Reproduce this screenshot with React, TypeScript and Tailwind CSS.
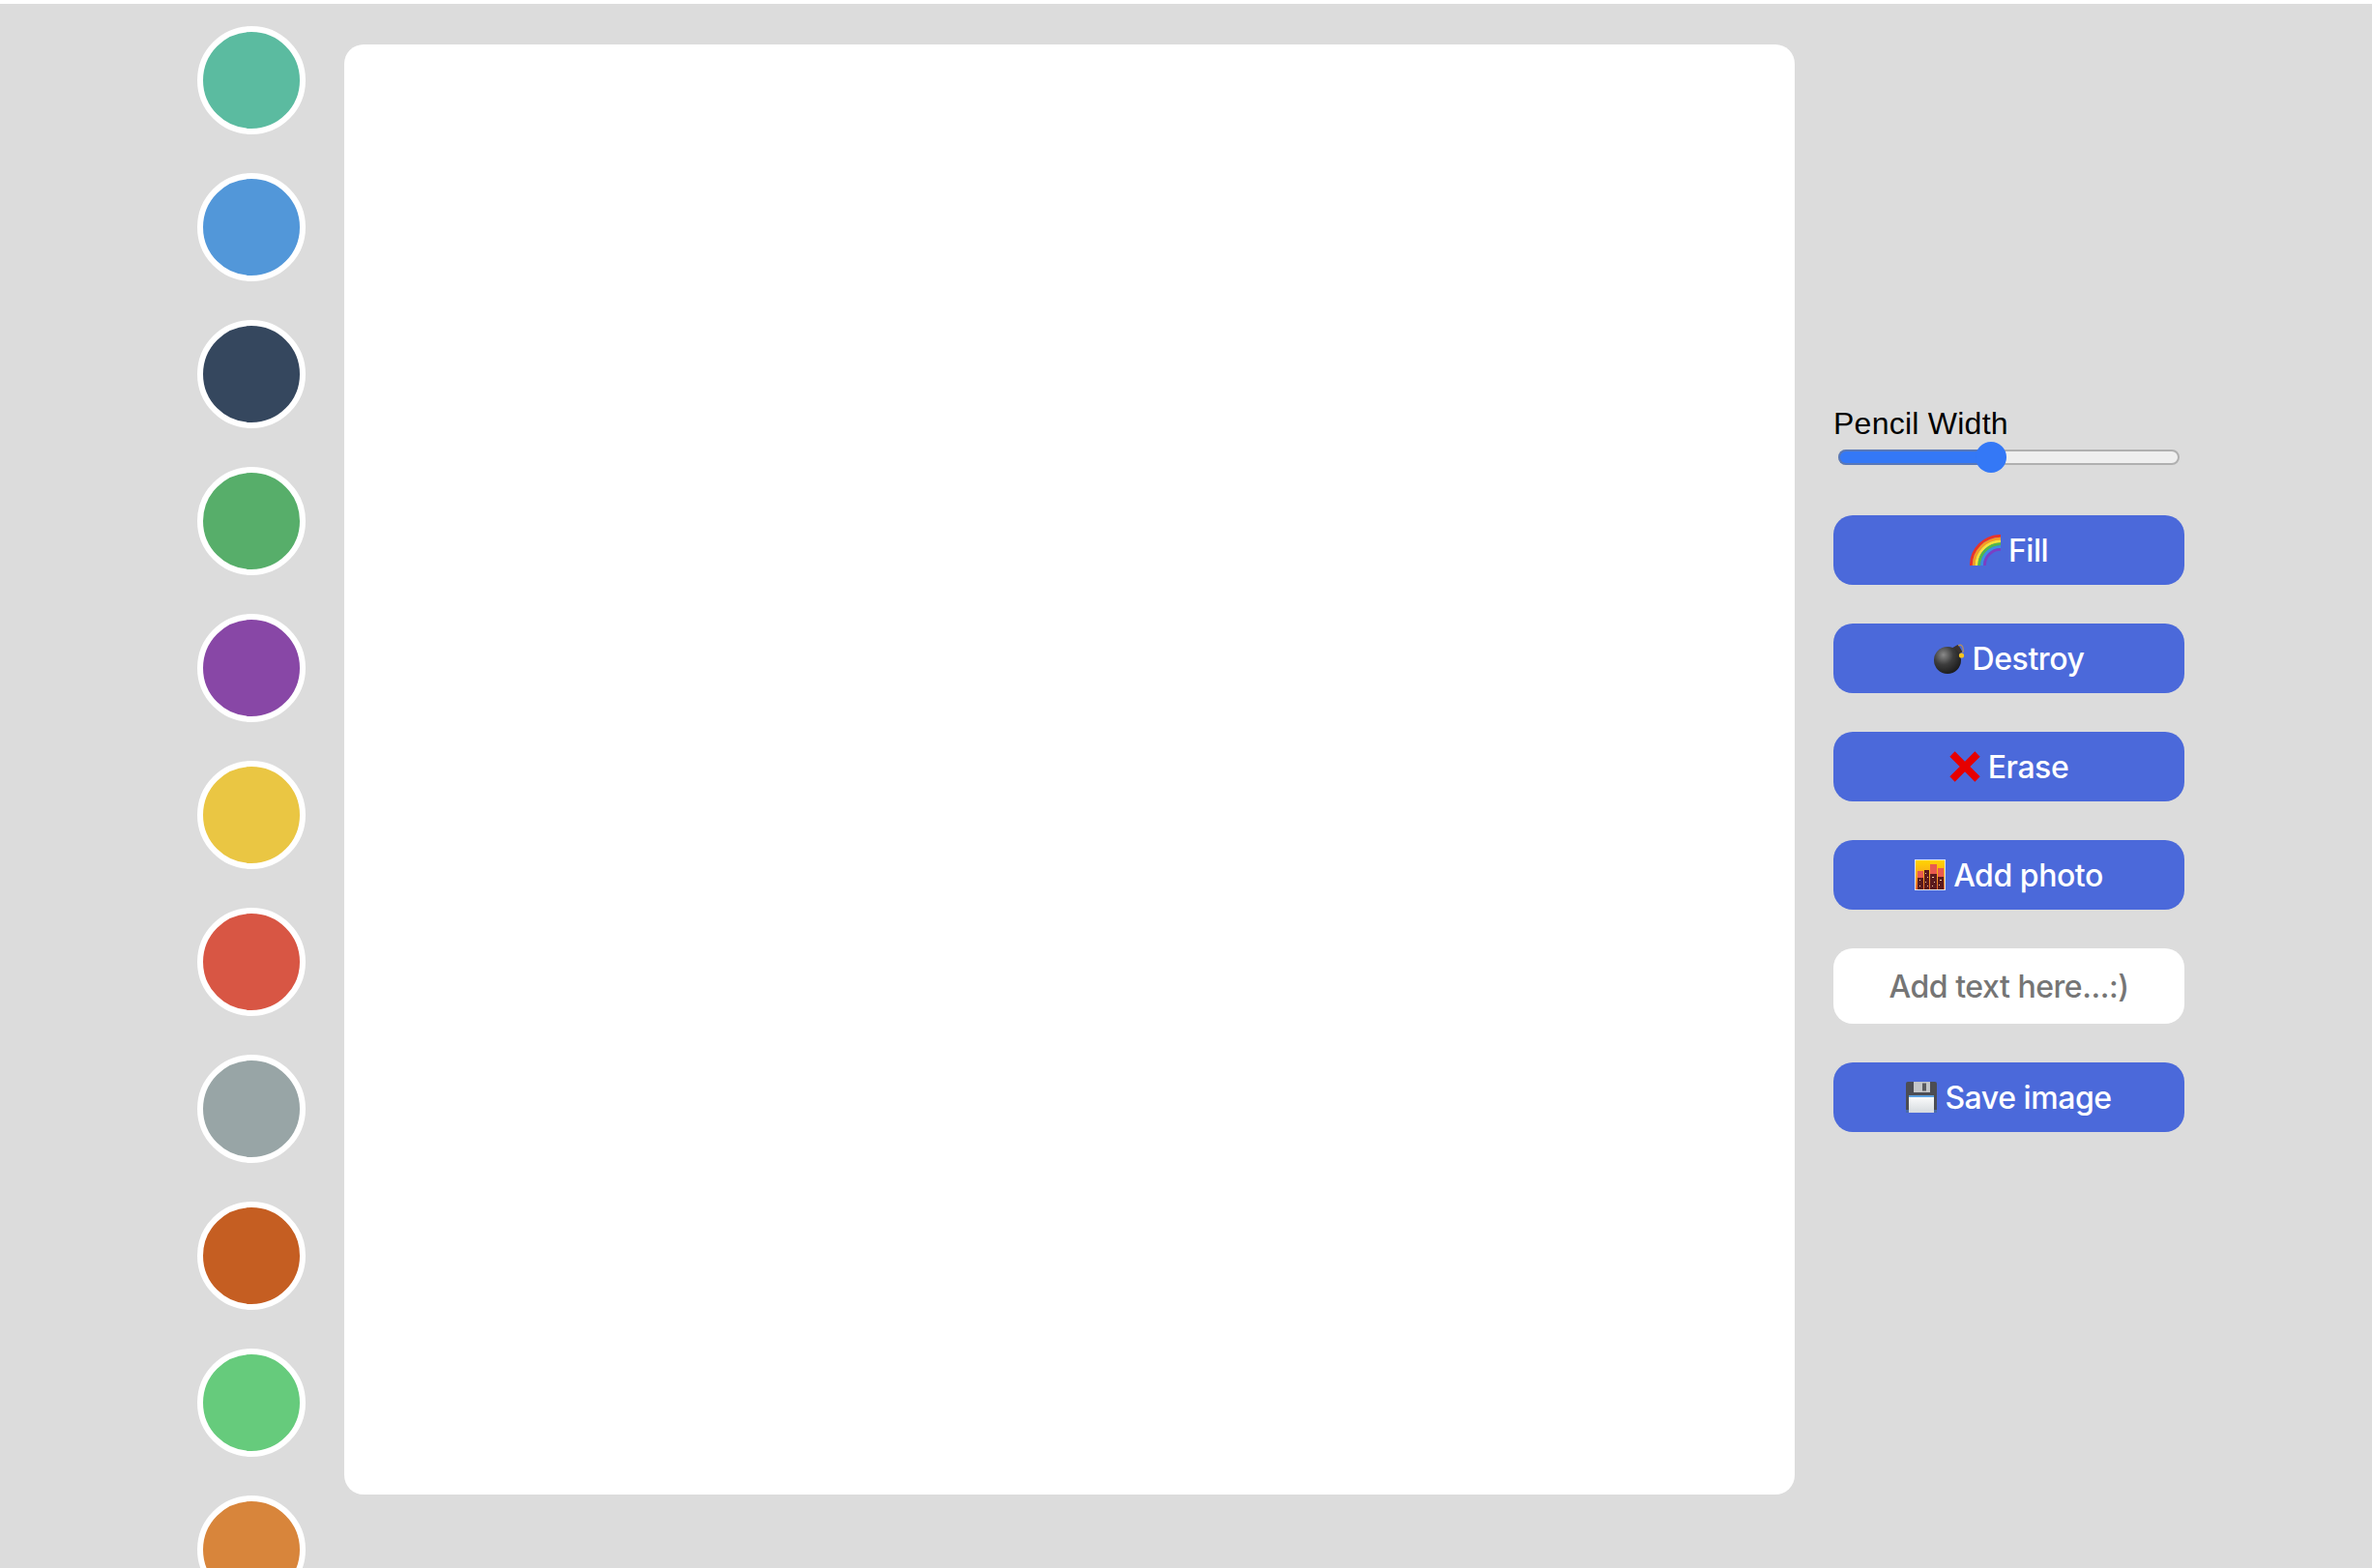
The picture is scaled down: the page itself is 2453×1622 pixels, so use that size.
import React from 'react';

const colors = [
    'bg-[#5bbba0]',
    'bg-[#5297d9]',
    'bg-[#35475e]',
    'bg-[#57ae6a]',
    'bg-[#8847a6]',
    'bg-[#eac643]',
    'bg-[#d85644]',
    'bg-[#98a5a6]',
    'bg-[#c55e22]',
    'bg-[#66cb7c]',
    'bg-[#d8853b]',
];

const RainbowIcon = () => (
    <svg viewBox="0 0 32 32" className="w-8 h-8 shrink-0" fill="none" strokeWidth="2.9">
        <path d="M1.4 32A30.6 30.6 0 0 1 32 1.4" stroke="#e8332a" />
        <path d="M4.2 32A27.8 27.8 0 0 1 32 4.2" stroke="#f59a23" />
        <path d="M7 32A25 25 0 0 1 32 7" stroke="#fbe13a" />
        <path d="M9.8 32A22.2 22.2 0 0 1 32 9.8" stroke="#53b848" />
        <path d="M12.6 32A19.4 19.4 0 0 1 32 12.6" stroke="#3c8fe0" />
        <path d="M15.4 32A16.6 16.6 0 0 1 32 15.4" stroke="#7b3fc4" />
    </svg>
);

const BombIcon = () => (
    <svg viewBox="0 0 32 32" className="w-8 h-8 shrink-0">
        <defs>
            <radialGradient id="bomb" cx="0.35" cy="0.3" r="0.8">
                <stop offset="0" stopColor="#8a8a8a" />
                <stop offset="0.45" stopColor="#3d3d3d" />
                <stop offset="1" stopColor="#151515" />
            </radialGradient>
        </defs>
        <rect x="20" y="3" width="8" height="9" rx="1" fill="#3a3230" transform="rotate(-30 24 8)" />
        <circle cx="14" cy="18" r="14" fill="url(#bomb)" />
        <path d="M25 3C28 1 31 3 30 10" stroke="#b8915a" strokeWidth="1.2" fill="none" />
        <circle cx="28.5" cy="13" r="2.6" fill="#f7c41c" />
    </svg>
);

const CrossIcon = () => (
    <svg viewBox="0 0 32 32" className="w-8 h-8 shrink-0">
        <path d="M3 3L29 29M29 3L3 29" stroke="#e60000" strokeWidth="7.5" />
    </svg>
);

const CityIcon = () => (
    <svg viewBox="0 0 32 32" className="w-8 h-8 shrink-0">
        <defs>
            <linearGradient id="sky" x1="0" y1="0" x2="0" y2="1">
                <stop offset="0" stopColor="#ffd400" />
                <stop offset="0.55" stopColor="#f9a51e" />
                <stop offset="1" stopColor="#e8602c" />
            </linearGradient>
        </defs>
        <rect width="32" height="32" fill="#dfe3e8" />
        <rect x="1" y="1" width="30" height="30" fill="url(#sky)" />
        <path d="M3 12h6v19H3zM16 5h7v26h-7zM24 9h6v22h-6z" fill="#e85a50" />
        <path d="M3 19h6v12H3zM10 11h5v20h-5zM16 15h7v16h-7zM24 18h6v13h-6z" fill="#5a1a1e" />
        <path d="M5 21h1v1H5zM11 14h1v1h-1zM13 18h1v1h-1zM11 23h1v1h-1zM18 18h2v1h-2zM20 23h1v1h-1zM26 21h2v1h-2zM25 26h1v1h-1zM5 27h1v1H5zM13 27h1v1h-1zM18 27h1v1h-1z" fill="#f4c9a0" />
    </svg>
);

const FloppyIcon = () => (
    <svg viewBox="0 0 32 32" className="w-8 h-8 shrink-0">
        <defs>
            <linearGradient id="label" x1="0" y1="0" x2="0" y2="1">
                <stop offset="0" stopColor="#ffffff" />
                <stop offset="1" stopColor="#d5dade" />
            </linearGradient>
        </defs>
        <rect width="32" height="32" rx="2" fill="#4c4d54" />
        <rect x="8" y="0" width="17" height="11" fill="#c4c6c9" />
        <rect x="17" y="1.5" width="4" height="8" fill="#5a5b60" />
        <rect x="3" y="14" width="26" height="18" fill="url(#label)" />
        <rect x="3" y="14" width="26" height="2" fill="#5aa0e0" />
        <rect x="0" y="29" width="3" height="3" fill="#4a6aa8" />
        <rect x="29" y="29" width="3" height="3" fill="#4a6aa8" />
    </svg>
);

const ActionButton = ({ icon, label }: { icon: React.ReactNode; label: string }) => (
    <button className="h-[72px] w-full flex items-center justify-center gap-2 rounded-[20px] bg-[#4b69da] text-white text-[32px] font-medium tracking-[-0.45px]">
        {icon}
        <span className="pt-[2px]">{label}</span>
    </button>
);

export default function App() {
    return (
        <div className="bg-white pt-1 h-[1622px] w-full overflow-hidden font-['Inter',sans-serif]">
            <div className="bg-[#dcdcdc] h-full flex items-start pl-[204px]">
                <div className="flex flex-col gap-10 pt-[23px] shrink-0">
                    {colors.map((color) => (
                        <div key={color} className={`w-28 h-28 rounded-full border-[6px] border-white shrink-0 ${color}`} />
                    ))}
                </div>
                <div className="w-[1500px] h-[1500px] mt-[42px] ml-10 bg-white rounded-[20px] shrink-0" />
                <div className="w-[363px] ml-10 mt-[416px] flex flex-col shrink-0">
                    <label className="text-[32px] leading-9 tracking-[0.25px] text-black font-['Liberation_Sans',sans-serif]">Pencil Width</label>
                    <div className="relative h-4 mx-[5px] mt-[9px] mb-[52px] rounded-full border-2 border-[#b0b0b0] bg-[#efefef]">
                        <div className="-m-[2px] h-4 w-[164px] rounded-l-full border-2 border-r-0 border-[#5878b8] bg-[#3478f6]" />
                        <div className="absolute left-[140px] -top-[10px] w-8 h-8 rounded-full bg-[#3478f6]" />
                    </div>
                    <div className="flex flex-col gap-10">
                        <ActionButton icon={<RainbowIcon />} label="Fill" />
                        <ActionButton icon={<BombIcon />} label="Destroy" />
                        <ActionButton icon={<CrossIcon />} label="Erase" />
                        <ActionButton icon={<CityIcon />} label="Add photo" />
                        <input
                            placeholder="Add text here...:)"
                            className="h-[78px] w-full rounded-[20px] bg-white text-center text-[32px] font-medium tracking-[-0.45px] placeholder:text-[#757575] outline-none"
                        />
                        <ActionButton icon={<FloppyIcon />} label="Save image" />
                    </div>
                </div>
            </div>
        </div>
    );
}
